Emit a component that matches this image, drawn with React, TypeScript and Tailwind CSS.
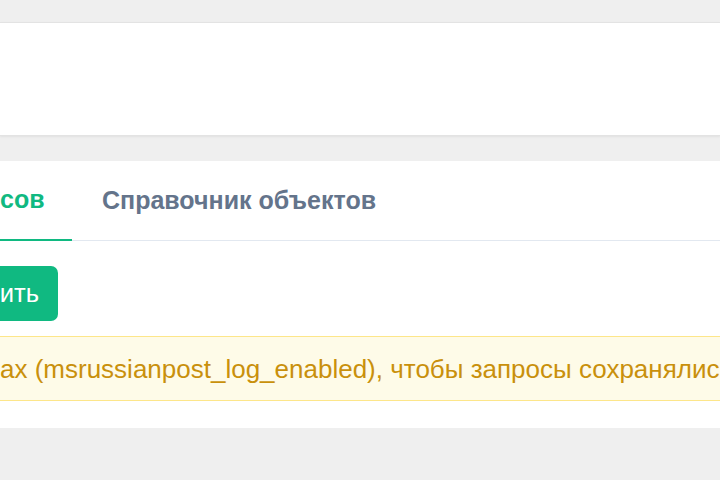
import React from "react";

export default function App() {
  return (
    <div
      className="w-[720px] h-[480px] overflow-hidden bg-[#efefef] pt-[22px]"
      style={{ fontFamily: '"Liberation Sans", "Noto Sans", sans-serif' }}
    >
      <div className="h-[114px] bg-white border-t border-b border-[#e3e3e3] shadow-[0_1px_2px_rgba(0,0,0,0.06)]" />
      <div className="mt-[25px] h-[267px] bg-white flex flex-col">
        <div className="flex h-[80px] border-b border-[#e2e8f0] items-stretch">
          <div className="w-[72px] -mb-px border-b-2 border-[#10b981] flex items-center text-[25px] font-bold text-[#10b981] whitespace-nowrap">
            сов
          </div>
          <div className="ml-[30px] flex items-center text-[25px] font-bold text-[#64748b] whitespace-nowrap">
            Справочник объектов
          </div>
        </div>
        <div className="mt-[25px] flex">
          <button className="h-[55px] w-[58px] rounded-r-[7px] bg-[#10b981] text-white text-[25.6px] font-medium flex items-center justify-end pr-[19px]">
            ить
          </button>
        </div>
        <div className="mt-[15px] h-[65px] bg-[#fefbe8] border-y border-[#fde68a] flex items-center whitespace-nowrap overflow-hidden text-[26px] text-[#c9900c] pt-[2px]">
          ах (msrussianpost_log_enabled), чтобы запросы сохранялись в журнале.
        </div>
      </div>
    </div>
  );
}
